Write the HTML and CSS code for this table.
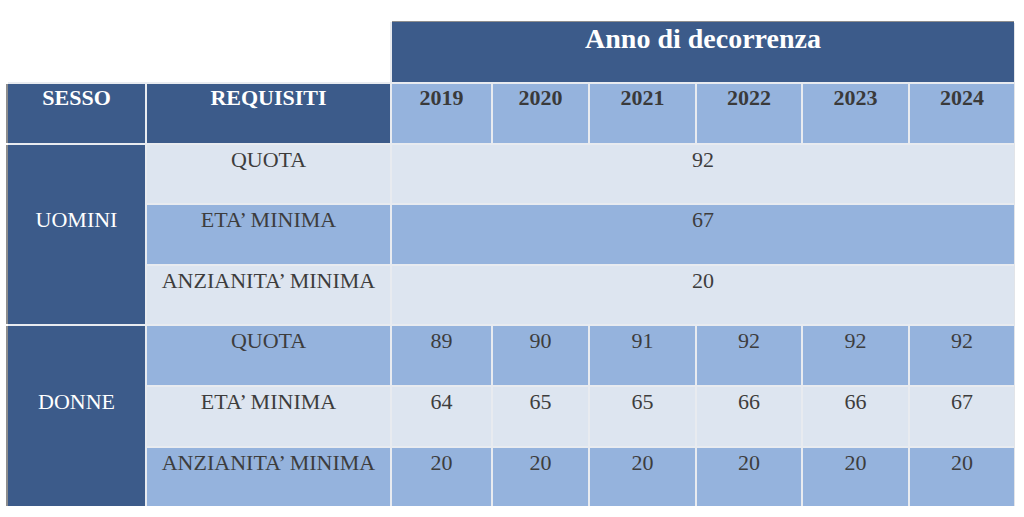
FILE: index.html
```html
<!DOCTYPE html>
<html lang="it">
<head>
<meta charset="utf-8">
<title>Requisiti pensione</title>
<link rel="stylesheet" href="styles.css">
</head>
<body>
<div class="table">
  <div class="blank"></div>
  <div class="cell anno">Anno di decorrenza</div>

  <div class="cell head dark">SESSO</div>
  <div class="cell head dark">REQUISITI</div>
  <div class="cell head year">2019</div>
  <div class="cell head year">2020</div>
  <div class="cell head year">2021</div>
  <div class="cell head year">2022</div>
  <div class="cell head year">2023</div>
  <div class="cell head year">2024</div>

  <div class="cell sesso uomini">UOMINI</div>
  <div class="cell pale">QUOTA</div>
  <div class="cell pale wide">92</div>
  <div class="cell light">ETA’ MINIMA</div>
  <div class="cell light wide">67</div>
  <div class="cell pale">ANZIANITA’ MINIMA</div>
  <div class="cell pale wide">20</div>

  <div class="cell sesso donne">DONNE</div>
  <div class="cell light">QUOTA</div>
  <div class="cell light">89</div>
  <div class="cell light">90</div>
  <div class="cell light">91</div>
  <div class="cell light">92</div>
  <div class="cell light">92</div>
  <div class="cell light">92</div>
  <div class="cell pale">ETA’ MINIMA</div>
  <div class="cell pale">64</div>
  <div class="cell pale">65</div>
  <div class="cell pale">65</div>
  <div class="cell pale">66</div>
  <div class="cell pale">66</div>
  <div class="cell pale">67</div>
  <div class="cell light">ANZIANITA’ MINIMA</div>
  <div class="cell light">20</div>
  <div class="cell light">20</div>
  <div class="cell light">20</div>
  <div class="cell light">20</div>
  <div class="cell light">20</div>
  <div class="cell light">20</div>
</div>
</body>
</html>
```

FILE: styles.css
```css
html, body {
  margin: 0;
  padding: 0;
  background: #ffffff;
}

body {
  font-family: "Liberation Serif", "Times New Roman", serif;
  color: #3d3d3d;
}

.table {
  margin: 22px 0 0 8px;
  width: 1006px;
  display: grid;
  grid-template-columns: 137px 243px 99px 95px 105px 104px 105px 104px;
  grid-template-rows: 60px 58.6px 58.6px 58.6px 58.6px 58.6px 58.6px 58.6px;
  gap: 2px;
  background: #e8ebf0;
  box-shadow: 1px 1px 0 #e2e4e8;
}

.blank {
  grid-column: 1 / 3;
  background: #ffffff;
  margin: -2px 0 0 -2px;
  box-shadow: -8px -22px 0 #ffffff;
}

.cell {
  text-align: center;
  font-size: 22px;
  line-height: 24px;
  padding-top: 3px;
  box-sizing: border-box;
}

.anno {
  grid-column: 3 / 9;
  background: #3c5b8a;
  color: #ffffff;
  font-weight: bold;
  font-size: 28px;
  line-height: 32px;
  padding-top: 1px;
  box-shadow: 0 -1px 0 #8e8e8e;
}

.head {
  font-weight: bold;
  font-size: 22px;
  padding-top: 2px;
}

.dark {
  background: #3c5b8a;
  color: #ffffff;
}

.sesso,
.head.dark:nth-child(3) {
  box-shadow: -2px 0 0 #8e8e8e;
}

.year {
  background: #95b3dd;
  color: #3a3a3a;
}

.sesso {
  grid-row: span 3;
  background: #3c5b8a;
  color: #ffffff;
  display: flex;
  align-items: center;
  justify-content: center;
  padding: 0 0 29px;
}

.pale {
  background: #dde5f0;
}

.light {
  background: #95b3dd;
}

.wide {
  grid-column: 3 / 9;
}
```
